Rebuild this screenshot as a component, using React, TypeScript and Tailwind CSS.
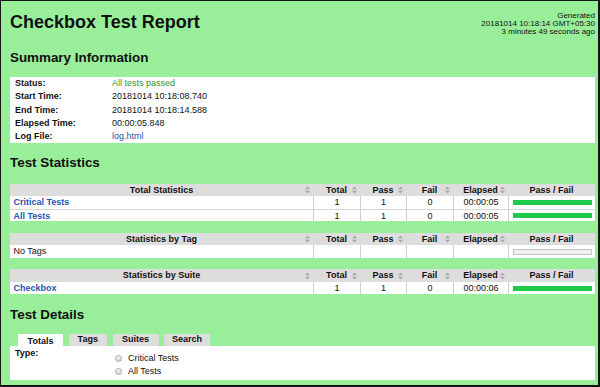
import React from "react";

type StatRow = {
  name: string;
  link?: boolean;
  total?: string;
  pass?: string;
  fail?: string;
  elapsed?: string;
  bar: "pass" | "empty";
};

const cols = ["Total", "Pass", "Fail", "Elapsed"];

const tables: { title: string; rows: StatRow[] }[] = [
  {
    title: "Total Statistics",
    rows: [
      { name: "Critical Tests", link: true, total: "1", pass: "1", fail: "0", elapsed: "00:00:05", bar: "pass" },
      { name: "All Tests", link: true, total: "1", pass: "1", fail: "0", elapsed: "00:00:05", bar: "pass" },
    ],
  },
  {
    title: "Statistics by Tag",
    rows: [{ name: "No Tags", bar: "empty" }],
  },
  {
    title: "Statistics by Suite",
    rows: [
      { name: "Checkbox", link: true, total: "1", pass: "1", fail: "0", elapsed: "00:00:06", bar: "pass" },
    ],
  },
];

const summary = [
  { label: "Status:", value: "All tests passed", cls: "text-[#359335]" },
  { label: "Start Time:", value: "20181014 10:18:08.740", cls: "" },
  { label: "End Time:", value: "20181014 10:18:14.588", cls: "" },
  { label: "Elapsed Time:", value: "00:00:05.848", cls: "" },
  { label: "Log File:", value: "log.html", cls: "text-[#1f56b0]" },
];

const SortIcon = () => (
  <svg width="5" height="8" viewBox="0 0 5 8" className="absolute right-[3px] top-[2.5px]">
    <polygon points="0,3.3 2.5,0.5 5,3.3" fill="#a8a8a8" />
    <polygon points="0,4.7 5,4.7 2.5,7.5" fill="#a8a8a8" />
  </svg>
);

const grid = "grid grid-cols-[303px_47px_46px_47px_55px_87px]";

const StatTable = ({ title, rows }: { title: string; rows: StatRow[] }) => (
  <div className="w-[585px]">
    <div className={`${grid} h-[12.5px] bg-[#dddddd] font-bold leading-[12.5px]`}>
      {[title, ...cols].map((c) => (
        <div key={c} className="relative text-center">
          {c}
          <SortIcon />
        </div>
      ))}
      <div className="text-center">Pass / Fail</div>
    </div>
    {rows.map((r, i) => (
      <div
        key={r.name}
        className={`${grid} h-[12.5px] bg-white leading-[12px] ${i > 0 ? "border-t border-[#d6d6d6]" : ""}`}
      >
        <div className={`pl-[3.5px] ${r.link ? "font-bold text-[#1f56b0]" : ""}`}>{r.name}</div>
        <div className="border-l border-[#d0d0d0] text-center">{r.total}</div>
        <div className="border-l border-[#d0d0d0] text-center">{r.pass}</div>
        <div className="border-l border-[#d0d0d0] text-center">{r.fail}</div>
        <div className="border-l border-[#d0d0d0] text-center">{r.elapsed}</div>
        <div className="flex items-center border-l border-[#d0d0d0] pl-[4px] pr-[3px]">
          {r.bar === "pass" ? (
            <div className="h-[5px] w-full bg-[#1fc94a]" />
          ) : (
            <div className="h-[6px] w-full border border-[#c4c4c4] bg-[#f0f0f0]" />
          )}
        </div>
      </div>
    ))}
  </div>
);

const Radio = ({ label }: { label: string }) => (
  <div className="flex h-[13.4px] items-center">
    <span className="h-[7px] w-[7px] rounded-full border border-[#a9a9a9] bg-linear-to-b from-[#f6f6f6] to-[#d6d6d6]" />
    <span className="ml-[6px]">{label}</span>
  </div>
);

export default function App() {
  const tabs = ["Totals", "Tags", "Suites", "Search"];
  return (
    <div className="h-[387px] w-[600px] overflow-hidden border-t border-l border-r-2 border-b-2 border-[#151515] bg-[#9e9] pl-[9px] pr-[3px] font-['Liberation_Sans',Arial,sans-serif] text-[9px] text-[#111]">
      <div className="flex h-[49px] justify-between pt-[11px]">
        <h1 className="text-[18px] font-bold leading-[20px]">Checkbox Test Report</h1>
        <div className="-mt-[0.5px] text-right text-[8px] leading-[8px]">
          <div>Generated</div>
          <div>20181014 10:18:14 GMT+05:30</div>
          <div>3 minutes 49 seconds ago</div>
        </div>
      </div>

      <h2 className="text-[13.4px] font-bold leading-[16px]">Summary Information</h2>
      <div className="mt-[11px] w-[585px] bg-white">
        {summary.map((s) => (
          <div key={s.label} className="grid h-[13.25px] grid-cols-[102px_1fr] leading-[13.25px]">
            <div className="pl-[5px] font-bold">{s.label}</div>
            <div className={s.cls}>{s.value}</div>
          </div>
        ))}
      </div>

      <h2 className="mt-[12px] text-[13.4px] font-bold leading-[16px]">Test Statistics</h2>
      <div className="mt-[12.5px] flex flex-col gap-[11.5px]">
        {tables.map((t) => (
          <StatTable key={t.title} title={t.title} rows={t.rows} />
        ))}
      </div>

      <h2 className="mt-[12.8px] text-[13.4px] font-bold leading-[16px]">Test Details</h2>
      <div className="mt-[11px] flex h-[11.7px] gap-[5.5px] pl-[8px] font-bold">
        {tabs.map((t, i) => (
          <div
            key={t}
            className={
              i === 0
                ? "w-[45px] bg-white pt-[1.5px] text-center leading-[11px]"
                : t === "Tags"
                  ? "w-[38.5px] bg-[#dddddd] text-center leading-[10px]"
                  : "w-[46px] bg-[#dddddd] text-center leading-[10px]"
            }
          >
            {t}
          </div>
        ))}
      </div>
      <div className="flex h-[34.7px] w-[585px] bg-white pt-[1.5px]">
        <div className="w-[105px] pl-[5px] font-bold leading-[13px]">Type:</div>
        <div className="mt-[4.5px]">
          <Radio label="Critical Tests" />
          <Radio label="All Tests" />
        </div>
      </div>
    </div>
  );
}
